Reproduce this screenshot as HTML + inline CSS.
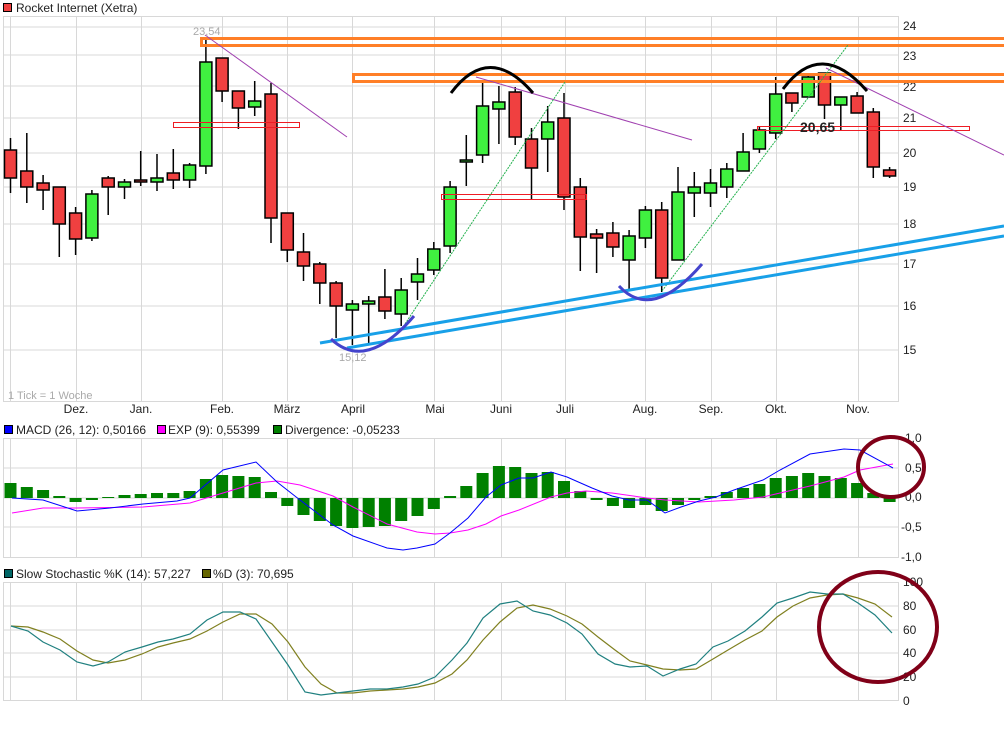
<!DOCTYPE html>
<html><head><meta charset="utf-8"><style>
html,body{margin:0;padding:0;background:#fff;width:1004px;height:741px;overflow:hidden}
svg{display:block;font-family:"Liberation Sans",sans-serif}
</style></head><body>
<svg width="1004" height="741" viewBox="0 0 1004 741" xmlns="http://www.w3.org/2000/svg">
<!-- title -->
<rect x="3.5" y="3.5" width="8" height="8" fill="#f04040" stroke="#000"/>
<text x="16" y="12" font-size="12" fill="#222">Rocket Internet (Xetra)</text>

<!-- main grid -->
<g stroke="#d8d8d8" stroke-width="1" fill="none">
<rect x="3.5" y="16.5" width="895" height="385"/>
<path d="M3 27H898M3 55H898M3 86H898M3 118H898M3 153H898M3 187H898M3 224H898M3 264H898M3 306H898M3 350H898"/>
<path d="M10.5 16V401M76.5 16V401M141.5 16V401M222.5 16V401M287.5 16V401M352.5 16V401M434.5 16V401M501.5 16V401M565.5 16V401M645.5 16V401M711.5 16V401M776.5 16V401M858.5 16V401"/>
</g>
<g font-size="12" fill="#222">
<text x="903" y="30">24</text><text x="903" y="60">23</text><text x="903" y="91">22</text><text x="903" y="122">21</text><text x="903" y="157">20</text><text x="903" y="191">19</text><text x="903" y="228">18</text><text x="903" y="268">17</text><text x="903" y="310">16</text><text x="903" y="354">15</text>
</g>
<g font-size="12" fill="#222" text-anchor="middle">
<text x="76" y="413">Dez.</text><text x="141" y="413">Jan.</text><text x="222" y="413">Feb.</text><text x="287" y="413">März</text><text x="353" y="413">April</text><text x="435" y="413">Mai</text><text x="501" y="413">Juni</text><text x="565" y="413">Juli</text><text x="645" y="413">Aug.</text><text x="711" y="413">Sep.</text><text x="776" y="413">Okt.</text><text x="858" y="413">Nov.</text>
</g>
<text x="8" y="399" font-size="11" fill="#aaa">1 Tick = 1 Woche</text>

<!-- candles -->
<g stroke="#000" stroke-width="1.5">
<line x1="10.5" y1="138" x2="10.5" y2="193"/><rect x="4.5" y="150" width="12" height="28" fill="#f04040"/>
<line x1="26.8" y1="133" x2="26.8" y2="203"/><rect x="20.8" y="171" width="12" height="16" fill="#f04040"/>
<line x1="43.1" y1="175" x2="43.1" y2="210"/><rect x="37.1" y="183" width="12" height="7" fill="#f04040"/>
<line x1="59.3" y1="187" x2="59.3" y2="257"/><rect x="53.3" y="187" width="12" height="37" fill="#f04040"/>
<line x1="75.6" y1="207" x2="75.6" y2="255"/><rect x="69.6" y="213" width="12" height="26" fill="#f04040"/>
<line x1="91.9" y1="190" x2="91.9" y2="241"/><rect x="85.9" y="194" width="12" height="44" fill="#40f040"/>
<line x1="108.2" y1="176" x2="108.2" y2="215"/><rect x="102.2" y="178" width="12" height="9" fill="#f04040"/>
<line x1="124.5" y1="179" x2="124.5" y2="199"/><rect x="118.5" y="182" width="12" height="5" fill="#40f040"/>
<line x1="140.7" y1="151" x2="140.7" y2="186"/><rect x="134.7" y="180" width="12" height="2" fill="#f04040"/>
<line x1="157" y1="154" x2="157" y2="191"/><rect x="151" y="178" width="12" height="4" fill="#40f040"/>
<line x1="173.3" y1="149" x2="173.3" y2="189"/><rect x="167.3" y="173" width="12" height="7" fill="#f04040"/>
<line x1="189.6" y1="163" x2="189.6" y2="188"/><rect x="183.6" y="165" width="12" height="15" fill="#40f040"/>
<line x1="205.9" y1="38" x2="205.9" y2="174"/><rect x="199.9" y="62" width="12" height="104" fill="#40f040"/>
<line x1="222.1" y1="58" x2="222.1" y2="102"/><rect x="216.1" y="58" width="12" height="33" fill="#f04040"/>
<line x1="238.4" y1="91" x2="238.4" y2="129"/><rect x="232.4" y="91" width="12" height="17" fill="#f04040"/>
<line x1="254.7" y1="81" x2="254.7" y2="116"/><rect x="248.7" y="101" width="12" height="6" fill="#40f040"/>
<line x1="271" y1="83" x2="271" y2="243"/><rect x="265" y="94" width="12" height="124" fill="#f04040"/>
<line x1="287.3" y1="213" x2="287.3" y2="262"/><rect x="281.3" y="213" width="12" height="37" fill="#f04040"/>
<line x1="303.5" y1="233" x2="303.5" y2="281"/><rect x="297.5" y="252" width="12" height="14" fill="#f04040"/>
<line x1="319.8" y1="262" x2="319.8" y2="304"/><rect x="313.8" y="264" width="12" height="19" fill="#f04040"/>
<line x1="336.1" y1="281" x2="336.1" y2="338"/><rect x="330.1" y="283" width="12" height="23" fill="#f04040"/>
<line x1="352.4" y1="300" x2="352.4" y2="345"/><rect x="346.4" y="304" width="12" height="6" fill="#40f040"/>
<line x1="368.7" y1="296" x2="368.7" y2="343"/><rect x="362.7" y="301" width="12" height="3" fill="#40f040"/>
<line x1="384.9" y1="269" x2="384.9" y2="319"/><rect x="378.9" y="297" width="12" height="14" fill="#f04040"/>
<line x1="401.2" y1="278" x2="401.2" y2="326"/><rect x="395.2" y="290" width="12" height="24" fill="#40f040"/>
<line x1="417.5" y1="258" x2="417.5" y2="300"/><rect x="411.5" y="274" width="12" height="8" fill="#40f040"/>
<line x1="433.8" y1="242" x2="433.8" y2="275"/><rect x="427.8" y="249" width="12" height="21" fill="#40f040"/>
<line x1="450.1" y1="181" x2="450.1" y2="253"/><rect x="444.1" y="187" width="12" height="59" fill="#40f040"/>
<line x1="466.3" y1="135" x2="466.3" y2="186"/><rect x="460.3" y="160" width="12" height="2" fill="#40f040"/>
<line x1="482.6" y1="83" x2="482.6" y2="163"/><rect x="476.6" y="106" width="12" height="49" fill="#40f040"/>
<line x1="498.9" y1="86" x2="498.9" y2="144"/><rect x="492.9" y="102" width="12" height="7" fill="#40f040"/>
<line x1="515.2" y1="87" x2="515.2" y2="145"/><rect x="509.2" y="92" width="12" height="45" fill="#f04040"/>
<line x1="531.5" y1="128" x2="531.5" y2="200"/><rect x="525.5" y="139" width="12" height="29" fill="#f04040"/>
<line x1="547.7" y1="106" x2="547.7" y2="172"/><rect x="541.7" y="122" width="12" height="17" fill="#40f040"/>
<line x1="564" y1="93" x2="564" y2="210"/><rect x="558" y="118" width="12" height="79" fill="#f04040"/>
<line x1="580.3" y1="178" x2="580.3" y2="271"/><rect x="574.3" y="187" width="12" height="50" fill="#f04040"/>
<line x1="596.6" y1="229" x2="596.6" y2="273"/><rect x="590.6" y="234" width="12" height="4" fill="#f04040"/>
<line x1="612.9" y1="222" x2="612.9" y2="257"/><rect x="606.9" y="233" width="12" height="14" fill="#f04040"/>
<line x1="629.1" y1="230" x2="629.1" y2="289"/><rect x="623.1" y="236" width="12" height="24" fill="#40f040"/>
<line x1="645.4" y1="206" x2="645.4" y2="248"/><rect x="639.4" y="210" width="12" height="28" fill="#40f040"/>
<line x1="661.7" y1="202" x2="661.7" y2="292"/><rect x="655.7" y="210" width="12" height="68" fill="#f04040"/>
<line x1="678" y1="167" x2="678" y2="260"/><rect x="672" y="192" width="12" height="68" fill="#40f040"/>
<line x1="694.3" y1="172" x2="694.3" y2="217"/><rect x="688.3" y="187" width="12" height="6" fill="#40f040"/>
<line x1="710.5" y1="169" x2="710.5" y2="207"/><rect x="704.5" y="183" width="12" height="10" fill="#40f040"/>
<line x1="726.8" y1="163" x2="726.8" y2="198"/><rect x="720.8" y="169" width="12" height="18" fill="#40f040"/>
<line x1="743.1" y1="133" x2="743.1" y2="171"/><rect x="737.1" y="152" width="12" height="19" fill="#40f040"/>
<line x1="759.4" y1="127" x2="759.4" y2="153"/><rect x="753.4" y="130" width="12" height="19" fill="#40f040"/>
<line x1="775.7" y1="77" x2="775.7" y2="139"/><rect x="769.7" y="94" width="12" height="39" fill="#40f040"/>
<line x1="791.9" y1="93" x2="791.9" y2="112"/><rect x="785.9" y="93" width="12" height="10" fill="#f04040"/>
<line x1="808.2" y1="75" x2="808.2" y2="97"/><rect x="802.2" y="77" width="12" height="20" fill="#40f040"/>
<line x1="824.5" y1="73" x2="824.5" y2="119"/><rect x="818.5" y="73" width="12" height="32" fill="#f04040"/>
<line x1="840.8" y1="97" x2="840.8" y2="130"/><rect x="834.8" y="97" width="12" height="8" fill="#40f040"/>
<line x1="857.1" y1="92" x2="857.1" y2="113"/><rect x="851.1" y="96" width="12" height="17" fill="#f04040"/>
<line x1="873.3" y1="108" x2="873.3" y2="178"/><rect x="867.3" y="112" width="12" height="55" fill="#f04040"/>
<line x1="889.6" y1="167" x2="889.6" y2="178"/><rect x="883.6" y="170" width="12" height="6" fill="#f04040"/>
</g>

<!-- overlays -->
<g fill="none">
<rect x="201.5" y="38.5" width="820" height="7" stroke="#ff7f27" stroke-width="3"/>
<rect x="353.5" y="74.5" width="670" height="7" stroke="#ff7f27" stroke-width="3"/>
<rect x="173.5" y="122.5" width="126" height="5" stroke="#ee1c24" stroke-width="1"/>
<rect x="441.5" y="194.5" width="145" height="5" stroke="#ee1c24" stroke-width="1"/>
<rect x="757.5" y="126.5" width="212" height="4" stroke="#ee1c24" stroke-width="1"/>
<path d="M205 35L347 137M476 77L692 140M826 68L1004 155" stroke="#a040b0" stroke-width="1"/>
<path d="M405 324L565 82M662 291L848 45" stroke="#22b14c" stroke-width="1" stroke-dasharray="2 1"/>
<path d="M320 343L1004 226M347 348L1004 236" stroke="#18a0e8" stroke-width="3"/>
<path d="M331 339Q366 372 414 316M619 286Q652 322 702 264" stroke="#4444cc" stroke-width="3"/>
<path d="M451 93Q489 42 533 93M783 89Q821 38 867 91" stroke="#000" stroke-width="3"/>
</g>
<text x="193" y="35" font-size="11" fill="#aaa">23,54</text>
<text x="339" y="361" font-size="11" fill="#aaa">15,12</text>
<text x="800" y="132" font-size="14" font-weight="bold" fill="#222">20,65</text>

<!-- MACD legend -->
<g font-size="12" fill="#222">
<rect x="4.5" y="425.5" width="8" height="8" fill="#0000ff" stroke="#000"/><text x="16" y="434">MACD (26, 12): 0,50166</text>
<rect x="157.5" y="425.5" width="8" height="8" fill="#ff00ff" stroke="#000"/><text x="168" y="434">EXP (9): 0,55399</text>
<rect x="273.5" y="425.5" width="8" height="8" fill="#008000" stroke="#000"/><text x="285" y="434">Divergence: -0,05233</text>
</g>
<g stroke="#d8d8d8" fill="none">
<rect x="3.5" y="438.5" width="895" height="119"/>
<path d="M3 468H898M3 498H898M3 527H898"/>
<path d="M10.5 438V557M76.5 438V557M141.5 438V557M222.5 438V557M287.5 438V557M352.5 438V557M434.5 438V557M501.5 438V557M565.5 438V557M645.5 438V557M711.5 438V557M776.5 438V557M858.5 438V557"/>
</g>
<g font-size="12" fill="#222">
<text x="905" y="442">1,0</text><text x="905" y="472">0,5</text><text x="905" y="501">0,0</text><text x="901" y="531">-0,5</text><text x="901" y="561">-1,0</text>
</g>
<g fill="#008000">
<rect x="4.5" y="483" width="12" height="15"/><rect x="20.8" y="487" width="12" height="11"/><rect x="37.1" y="490" width="12" height="8"/><rect x="53.3" y="496" width="12" height="2"/><rect x="69.6" y="498" width="12" height="4"/><rect x="85.9" y="498" width="12" height="2"/><rect x="102.2" y="497" width="12" height="1"/><rect x="118.5" y="495" width="12" height="3"/><rect x="134.7" y="494" width="12" height="4"/><rect x="151" y="493" width="12" height="5"/><rect x="167.3" y="493" width="12" height="5"/><rect x="183.6" y="491" width="12" height="7"/><rect x="199.9" y="479" width="12" height="19"/><rect x="216.1" y="475" width="12" height="23"/><rect x="232.4" y="476" width="12" height="22"/><rect x="248.7" y="477" width="12" height="21"/><rect x="265" y="492" width="12" height="6"/><rect x="281.3" y="498" width="12" height="8"/><rect x="297.5" y="498" width="12" height="17"/><rect x="313.8" y="498" width="12" height="23"/><rect x="330.1" y="498" width="12" height="28"/><rect x="346.4" y="498" width="12" height="30"/><rect x="362.7" y="498" width="12" height="29"/><rect x="378.9" y="498" width="12" height="28"/><rect x="395.2" y="498" width="12" height="23"/><rect x="411.5" y="498" width="12" height="18"/><rect x="427.8" y="498" width="12" height="11"/><rect x="444.1" y="496" width="12" height="2"/><rect x="460.3" y="486" width="12" height="12"/><rect x="476.6" y="473" width="12" height="25"/><rect x="492.9" y="466" width="12" height="32"/><rect x="509.2" y="467" width="12" height="31"/><rect x="525.5" y="473" width="12" height="25"/><rect x="541.7" y="472" width="12" height="26"/><rect x="558" y="481" width="12" height="17"/><rect x="574.3" y="491" width="12" height="7"/><rect x="590.6" y="498" width="12" height="2"/><rect x="606.9" y="498" width="12" height="8"/><rect x="623.1" y="498" width="12" height="10"/><rect x="639.4" y="498" width="12" height="7"/><rect x="655.7" y="498" width="12" height="13"/><rect x="672" y="498" width="12" height="7"/><rect x="688.3" y="498" width="12" height="2"/><rect x="704.5" y="496" width="12" height="2"/><rect x="720.8" y="492" width="12" height="6"/><rect x="737.1" y="488" width="12" height="10"/><rect x="753.4" y="484" width="12" height="14"/><rect x="769.7" y="478" width="12" height="20"/><rect x="785.9" y="476" width="12" height="22"/><rect x="802.2" y="473" width="12" height="25"/><rect x="818.5" y="476" width="12" height="22"/><rect x="834.8" y="478" width="12" height="20"/><rect x="851.1" y="483" width="12" height="15"/><rect x="867.3" y="493" width="12" height="5"/><rect x="883.6" y="498" width="12" height="4"/>
</g>
<polyline fill="none" stroke="#ff00ff" stroke-width="1" points="12,513 43,508 77,508 143,507 190,503 223,493 256,483 277,481 300,485 333,496 353,507 387,524 417,532 435,534 450,533 468,530 486,524 501,516 519,510 551,497 567,493 586,491 612,493 647,498 665,500 699,502 734,500 763,497 780,493 810,486 844,477 860,470 893,464"/>
<polyline fill="none" stroke="#0000ff" stroke-width="1" points="12,498 43,500 77,511 110,508 143,504 177,501 190,498 223,470 256,462 277,482 300,500 333,525 353,536 387,548 403,550 417,548 435,544 450,533 468,518 486,497 501,485 519,478 533,478 551,472 567,477 592,488 612,496 629,500 647,500 665,513 681,507 699,501 716,497 734,490 763,480 780,470 810,454 844,449 860,450 893,468"/>
<ellipse cx="891" cy="467" rx="33" ry="30" fill="none" stroke="#800018" stroke-width="4"/>

<!-- Stochastic -->
<g font-size="12" fill="#222">
<rect x="4.5" y="569.5" width="8" height="8" fill="#006666" stroke="#000"/><text x="16" y="578">Slow Stochastic %K (14): 57,227</text>
<rect x="202.5" y="569.5" width="8" height="8" fill="#666600" stroke="#000"/><text x="213" y="578">%D (3): 70,695</text>
</g>
<g stroke="#d8d8d8" fill="none">
<rect x="3.5" y="582.5" width="895" height="118"/>
<path d="M3 606H898M3 630H898M3 653H898M3 677H898"/>
<path d="M10.5 582V701M76.5 582V701M141.5 582V701M222.5 582V701M287.5 582V701M352.5 582V701M434.5 582V701M501.5 582V701M565.5 582V701M645.5 582V701M711.5 582V701M776.5 582V701M858.5 582V701"/>
</g>
<g font-size="12" fill="#222">
<text x="903" y="586">100</text><text x="903" y="610">80</text><text x="903" y="634">60</text><text x="903" y="657">40</text><text x="903" y="681">20</text><text x="903" y="705">0</text>
</g>
<polyline fill="none" stroke="#808020" stroke-width="1.2" points="11,626 28,627 43,632 60,639 77,651 93,660 108,663 125,660 142,654 158,647 173,643 190,639 207,631 223,622 240,614 256,614 272,624 288,642 305,667 321,684 337,693 353,693 370,691 387,690 403,689 418,687 435,683 452,674 467,660 483,640 500,622 517,608 533,605 550,609 567,616 582,624 598,637 615,650 630,661 647,665 663,669 680,670 696,669 713,659 728,650 745,640 762,631 777,617 793,606 810,598 827,595 843,594 858,598 875,604 892,617"/>
<polyline fill="none" stroke="#208080" stroke-width="1.2" points="11,626 28,631 43,642 60,650 77,662 93,666 108,662 125,652 142,647 158,642 173,639 190,634 207,620 223,612 240,612 256,619 272,642 288,665 305,692 321,695 337,693 353,691 370,689 387,689 403,687 418,684 435,677 452,660 467,643 483,618 500,604 517,601 533,611 550,615 567,623 582,634 598,654 615,664 630,667 647,666 663,676 680,669 696,664 713,647 728,641 745,631 762,617 777,603 793,598 810,592 827,594 843,594 858,603 875,615 892,633"/>
<ellipse cx="878" cy="627" rx="59" ry="55" fill="none" stroke="#800018" stroke-width="4"/>
</svg>
</body></html>
